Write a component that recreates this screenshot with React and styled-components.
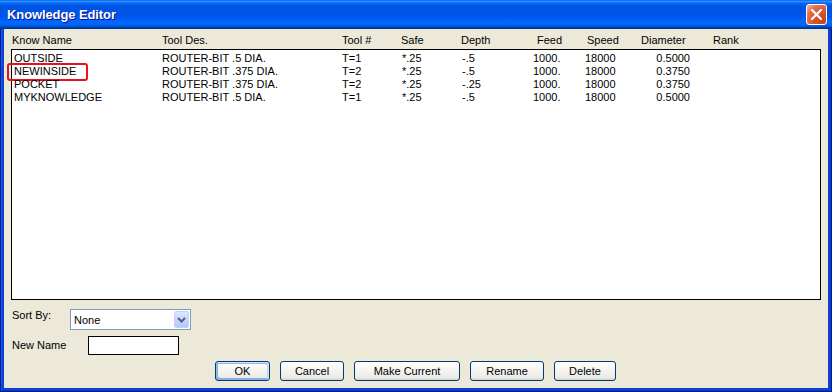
import styled, { createGlobalStyle } from 'styled-components';

const GlobalStyle = createGlobalStyle`
  html, body {
    margin: 0;
    padding: 0;
    background: #ffffff;
    overflow: hidden;
  }

  * {
    box-sizing: border-box;
  }
`;

const headerCols = '150px 180px 59px 60px 76px 50px 54px 72px 1fr';
const rowCols = '148px 180px 60px 60px 71px 52px 52px 53px 1fr';

const headers = ['Know Name', 'Tool Des.', 'Tool #', 'Safe', 'Depth', 'Feed', 'Speed', 'Diameter', 'Rank'];

const knowledge = [
  { name: 'OUTSIDE', tool: 'ROUTER-BIT .5 DIA.', num: 'T=1', safe: '*.25', depth: '-.5', feed: '1000.', speed: '18000', dia: '0.5000' },
  { name: 'NEWINSIDE', tool: 'ROUTER-BIT .375 DIA.', num: 'T=2', safe: '*.25', depth: '-.5', feed: '1000.', speed: '18000', dia: '0.3750', marked: true },
  { name: 'POCKET', tool: 'ROUTER-BIT .375 DIA.', num: 'T=2', safe: '*.25', depth: '-.25', feed: '1000.', speed: '18000', dia: '0.3750' },
  { name: 'MYKNOWLEDGE', tool: 'ROUTER-BIT .5 DIA.', num: 'T=1', safe: '*.25', depth: '-.5', feed: '1000.', speed: '18000', dia: '0.5000' },
];

const buttons = [
  { label: 'OK', width: 55, isDefault: true },
  { label: 'Cancel', width: 64 },
  { label: 'Make Current', width: 106 },
  { label: 'Rename', width: 74 },
  { label: 'Delete', width: 62 },
];

const App = () => {
  return (
    <>
      <GlobalStyle />
      <Frame>
        <TitleBar>
          <Title>Knowledge Editor</Title>
          <CloseButton aria-label="Close">
            <svg width="11" height="11" viewBox="0 0 11 11">
              <path d="M1 1 L10 10 M10 1 L1 10" stroke="#ffffff" strokeWidth="2.2" strokeLinecap="square" />
            </svg>
          </CloseButton>
        </TitleBar>

        <Client>
          <HeaderRow>
            {headers.map(h => (
              <span key={h}>{h}</span>
            ))}
          </HeaderRow>

          <ListBox>
            {knowledge.map(k => (
              <ListRow key={k.name}>
                {k.marked && <Marker />}
                <span>{k.name}</span>
                <span>{k.tool}</span>
                <span>{k.num}</span>
                <span>{k.safe}</span>
                <span>{k.depth}</span>
                <span>{k.feed}</span>
                <span>{k.speed}</span>
                <Right>{k.dia}</Right>
                <span></span>
              </ListRow>
            ))}
          </ListBox>

          <FieldRow $top={9} $align="flex-start">
            <Label $width={58}>Sort By:</Label>
            <Combo>
              <ComboText>None</ComboText>
              <ComboButton>
                <svg width="9" height="6" viewBox="0 0 9 6">
                  <path d="M1 1 L4.5 4.5 L8 1" fill="none" stroke="#4d6185" strokeWidth="2" />
                </svg>
              </ComboButton>
            </Combo>
          </FieldRow>

          <FieldRow $top={6} $align="center">
            <Label $width={76}>New Name</Label>
            <TextInput />
          </FieldRow>

          <ButtonBar>
            {buttons.map(b => (
              <Button key={b.label} $width={b.width} $default={b.isDefault}>
                {b.label}
              </Button>
            ))}
          </ButtonBar>
        </Client>
      </Frame>
    </>
  );
};

export default App;

const Frame = styled.div`
  width: 832px;
  height: 392px;
  display: flex;
  flex-direction: column;
  background: #0842d8;
  padding: 0 4px 4px 4px;
  box-shadow: inset 1px 0 #001a8c, inset -1px 0 #001a8c, inset 0 -1px #001a8c,
    inset 2px 0 #1659e8, inset -2px 0 #0a3ccc, inset 0 -2px #0a3ccc;
  font-family: "Liberation Sans", Arial, sans-serif;
  font-size: 11px;
  color: #000000;
`;

const TitleBar = styled.div`
  height: 29px;
  margin: 0 -4px;
  display: flex;
  align-items: center;
  justify-content: space-between;
  padding: 0 5px 1px 7px;
  background: linear-gradient(
    180deg,
    #0058ee 0%,
    #3593ff 4%,
    #288eff 6%,
    #127dff 8%,
    #036ffc 10%,
    #0262ee 14%,
    #0057e5 20%,
    #0054e3 24%,
    #0055eb 56%,
    #005bf5 66%,
    #026afe 76%,
    #0062ef 86%,
    #0052d6 92%,
    #0040ab 94%,
    #003092 100%
  );
`;

const Title = styled.span`
  font-family: "Liberation Sans", Arial, sans-serif;
  font-weight: bold;
  font-size: 13px;
  color: #ffffff;
  text-shadow: 1px 1px #0f1089;
  letter-spacing: -0.1px;
`;

const CloseButton = styled.div`
  width: 21px;
  height: 21px;
  border: 1px solid #ffffff;
  border-radius: 3px;
  display: flex;
  align-items: center;
  justify-content: center;
  background: radial-gradient(circle at 85% 85%, #c74218 0%, #d9562f 45%, #e2704f 70%, #f3b09a 95%);
`;

const Client = styled.div`
  flex: 1;
  background: #ece9d8;
  padding: 0 7px;
  display: flex;
  flex-direction: column;
`;

const HeaderRow = styled.div`
  display: grid;
  grid-template-columns: ${headerCols};
  padding: 5px 0 2px 1px;
  line-height: 13px;
  white-space: nowrap;
`;

const ListBox = styled.div`
  height: 251px;
  background: #ffffff;
  border: 1px solid #000000;
  padding-top: 2px;
`;

const ListRow = styled.div`
  position: relative;
  display: grid;
  grid-template-columns: ${rowCols};
  padding-left: 2px;
  height: 13px;
  line-height: 13px;
  white-space: nowrap;
`;

const Right = styled.span`
  text-align: right;
`;

const Marker = styled.div`
  position: absolute;
  left: -5px;
  top: -2px;
  width: 81px;
  height: 18px;
  border: 2px solid #e8101a;
  border-radius: 3px;
  pointer-events: none;
`;

const FieldRow = styled.div`
  display: flex;
  align-items: ${p => p.$align};
  margin-top: ${p => p.$top}px;
  padding-left: 1px;
`;

const Label = styled.span`
  width: ${p => p.$width}px;
  line-height: 13px;
  flex-shrink: 0;
`;

const Combo = styled.div`
  width: 121px;
  height: 21px;
  border: 1px solid #7f9db9;
  background: #ffffff;
  display: flex;
  align-items: center;
  justify-content: space-between;
  padding: 0 1px 0 3px;
`;

const ComboText = styled.span`
  font-size: 11px;
  padding-top: 1px;
`;

const ComboButton = styled.div`
  width: 15px;
  height: 17px;
  border: 1px solid #c3d3fd;
  border-radius: 2px;
  background: linear-gradient(180deg, #dde8fe 0%, #c4d5fb 50%, #b4c8f6 100%);
  display: flex;
  align-items: center;
  justify-content: center;
`;

const TextInput = styled.div`
  width: 91px;
  height: 19px;
  border: 1px solid #000000;
  background: #ffffff;
`;

const ButtonBar = styled.div`
  display: flex;
  justify-content: center;
  gap: 10px;
  margin-top: 6px;
  padding-right: 1px;
`;

const Button = styled.div`
  width: ${p => p.$width}px;
  height: 20px;
  border: 1px solid #003c74;
  border-radius: 3px;
  background: linear-gradient(180deg, #ffffff 0%, #ecebe6 86%, #d6d0c5 100%);
  display: flex;
  align-items: center;
  justify-content: center;
  font-size: 11px;
  box-shadow: ${p =>
    p.$default
      ? 'inset -1px 1px #cee7ff, inset 1px 2px #98b8ea, inset -2px 2px #bcd4f6, inset 1px -1px #89ade4, inset 2px -2px #89ade4'
      : 'none'};
`;
